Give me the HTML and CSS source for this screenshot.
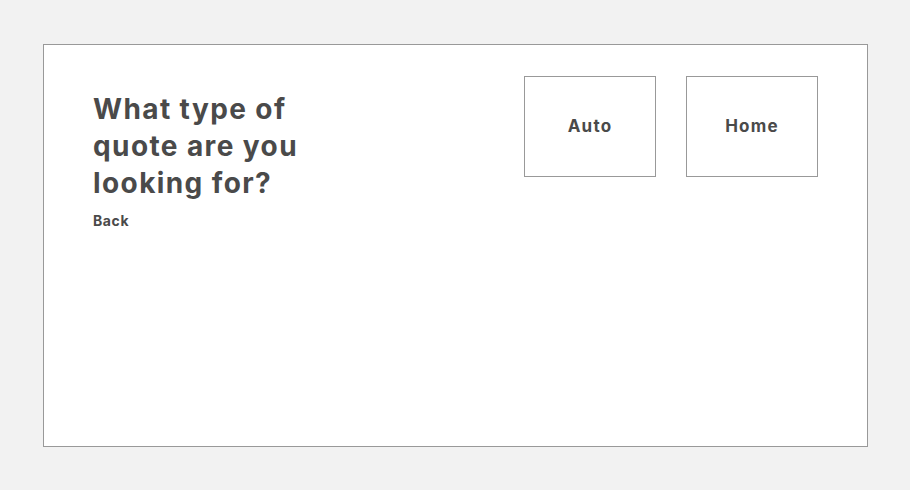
FILE: index.html
```html
<!DOCTYPE html>
<html>
<head>
<meta charset="utf-8">
<link rel="stylesheet" href="styles.css">
</head>
<body>
<div class="card">
  <div class="intro">
    <h1 class="title">What type of quote are you looking for?</h1>
    <a class="back" href="#">Back</a>
  </div>
  <div class="options">
    <button class="option">Auto</button>
    <button class="option">Home</button>
  </div>
</div>
</body>
</html>
```
FILE: styles.css
```css
html, body {
  margin: 0;
  padding: 0;
  background: #f2f2f2;
}
body {
  font-family: Inter, "Liberation Sans", sans-serif;
  color: #4a4a4a;
}
.card {
  box-sizing: border-box;
  margin: 44px 0 0 43px;
  width: 825px;
  height: 403px;
  background: #fff;
  border: 1px solid #999;
  padding: 31px 49px;
  display: flex;
  justify-content: space-between;
  align-items: flex-start;
}
.intro {
  padding-top: 15px;
}
.title {
  margin: 0;
  width: 250px;
  font-size: 28px;
  line-height: 37px;
  font-weight: 700;
  letter-spacing: 1.4px;
}
.back {
  display: block;
  margin-top: 10px;
  font-size: 14px;
  font-weight: 700;
  letter-spacing: 0.6px;
  color: #4a4a4a;
  text-decoration: none;
}
.options {
  display: flex;
  gap: 30px;
}
.option {
  box-sizing: border-box;
  width: 132px;
  height: 101px;
  background: #fff;
  border: 1px solid #999;
  font-family: inherit;
  font-size: 17px;
  font-weight: 700;
  letter-spacing: 1.2px;
  color: #4a4a4a;
  padding: 0 0 2px;
  cursor: pointer;
}
```
